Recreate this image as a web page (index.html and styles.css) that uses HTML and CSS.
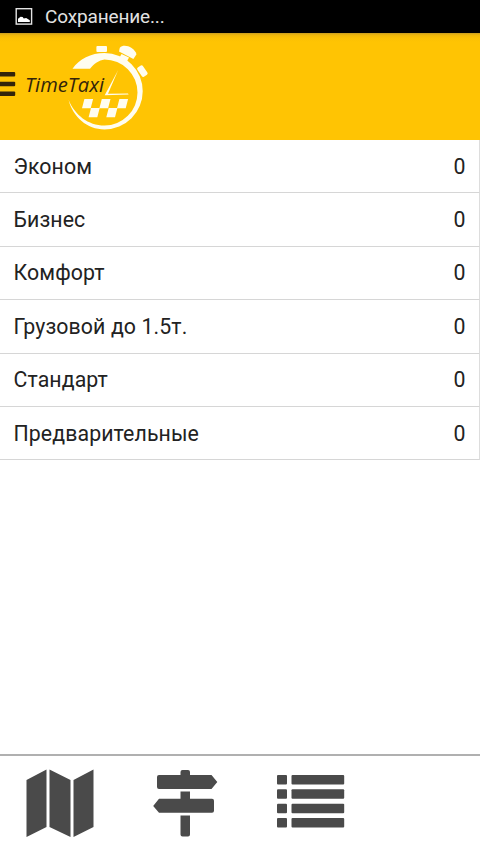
FILE: index.html
```html
<!DOCTYPE html>
<html lang="ru">
<head>
<meta charset="utf-8">
<title>TimeTaxi</title>
<link rel="stylesheet" href="styles.css">
</head>
<body>
<div class="status">
  <svg class="status-icon" width="18" height="18" viewBox="0 0 18 18"><rect x="1.2" y="0.700" width="15.4" height="15.4" fill="none" stroke="#e4e4e4" stroke-width="1.4"/><path d="M3 14v-3.200l2.600-2 2 .2 1.200 1.600 2.400-.6 3.600 2.200v1.800z" fill="#fff"/></svg>
  <span class="status-text">Сохранение...</span>
</div>
<header class="header">
  <svg class="logo" width="160" height="106" viewBox="0 34 160 106">
    <g fill="#33240a"><rect x="-3" y="72" width="18.2" height="4.6" rx="1"/><rect x="-3" y="81.8" width="18.2" height="4.4" rx="1"/><rect x="-3" y="91.4" width="18.2" height="4.6" rx="1"/></g>
    <g fill="#fffdf0">
      <path d="M72.500 68.800C79 59 91 53 104.500 53A38.200 38.200 0 1 1 104.500 129.400C87 129.400 73 117 68.600 100C75 115 88 125.500 104.500 125.500A33 33 0 0 0 104.500 59.500C99 60.300 94 63.500 90 68.800Z"/>
      <rect x="96.400" y="46" width="10.600" height="6" rx="1"/>
      <path d="M121.500 54l7.500 3.500-2.800 5-7.500-3.500z"/>
      <path d="M119.800 47.800C124 43.200 134 47.300 136.500 54.200L133.400 59 119 51.600Z"/>
      <rect x="136.800" y="67.800" width="11" height="6.600" rx="1.500" transform="rotate(56 142.300 71.200)"/>
      <path d="M118.200 70L104.700 95.200 128.600 94.600 128 93.400 108 93.700Z"/>
      <path d="M84.400 99h8.700l-2.400 9.200H82zM101.800 99h8.700l-2.400 9.200h-8.700zM119.400 99h8.700l-2.400 9.200H117zM91 108h8.700l-2.400 9.200h-8.700zM108.700 108h8.700l-2.400 9.200h-8.700z"/>
    </g>
    <text class="logo-text" x="25" y="91.500" textLength="79" lengthAdjust="spacingAndGlyphs">TimeTaxi</text>
  </svg>
</header>
<main class="list">
  <div class="row"><span>Эконом</span><span>0</span></div>
  <div class="row"><span>Бизнес</span><span>0</span></div>
  <div class="row"><span>Комфорт</span><span>0</span></div>
  <div class="row"><span>Грузовой до 1.5т.</span><span>0</span></div>
  <div class="row"><span>Стандарт</span><span>0</span></div>
  <div class="row"><span>Предварительные</span><span>0</span></div>
</main>
<nav class="tabs">
  <svg width="68" height="68" viewBox="26 769 68 68"><path d="M26.500 780L46.500 769.500V827L26.500 837zM49.500 769.500L70.500 780V837L49.500 827zM73.500 780L93.500 769.500V827L73.500 837z"/></svg>
  <svg width="65" height="68" viewBox="153 769 65 68"><path d="M180.500 775V772a2 2 0 0 1 2-2h5.500a2 2 0 0 1 2 2v3h21.500L217.300 782 211.500 789H159a2 2 0 0 1-2-2V777a2 2 0 0 1 2-2zM180.500 791.500H190V798.800H212a2 2 0 0 1 2 2v10a2 2 0 0 1-2 2H159L153.200 806 159 798.800H180.500zM180.500 815.500H190V834.500a2 2 0 0 1-2 2h-5.500a2 2 0 0 1-2-2z"/></svg>
  <svg width="68" height="68" viewBox="277 769 68 68"><g id="lines"><rect x="277" y="775" width="10" height="9.500" rx="1"/><rect x="291.500" y="775" width="52.700" height="9.500" rx="1"/></g><use href="#lines" y="14.300"/><use href="#lines" y="28.700"/><use href="#lines" y="43"/></svg>
</nav>
</body>
</html>
```
FILE: styles.css
```css
* { box-sizing: border-box; }
body {
  margin: 0;
  height: 854px;
  display: flex;
  flex-direction: column;
  background: #fff;
  color: #222;
  font-family: Roboto, "Noto Sans", sans-serif;
  overflow: hidden;
}
.status {
  height: 33px;
  flex: none;
  display: flex;
  align-items: center;
  gap: 12px;
  padding-left: 15px;
  background: #000;
  color: #e2e2e2;
}
.status-icon { flex: none; }
.status-text { font-size: 19px; line-height: 33px; letter-spacing: -0.15px; }
.header {
  height: 107px;
  flex: none;
  padding-top: 1px;
  background: linear-gradient(#c99d20 0, #eeb60b 2px, #fbc005 5px, #ffc403 9px);
}
.logo { display: block; }
.logo-text { font: italic 20px "Open Sans", sans-serif; fill: #33240a; }
.list { flex: 1; }
.row {
  height: 53.4px;
  display: flex;
  align-items: center;
  justify-content: space-between;
  padding: 0 13.5px 0 13.5px;
  border-right: 1px solid #ddd;
  border-bottom: 1px solid #d6d6d6;
  font-size: 21.3px;
  letter-spacing: 0.1px;
}
.tabs {
  height: 100px;
  flex: none;
  display: flex;
  gap: 59px;
  padding: 13px 26px 0;
  border-top: 2px solid #b0b0b0;
  fill: #4a4a4a;
}
```
